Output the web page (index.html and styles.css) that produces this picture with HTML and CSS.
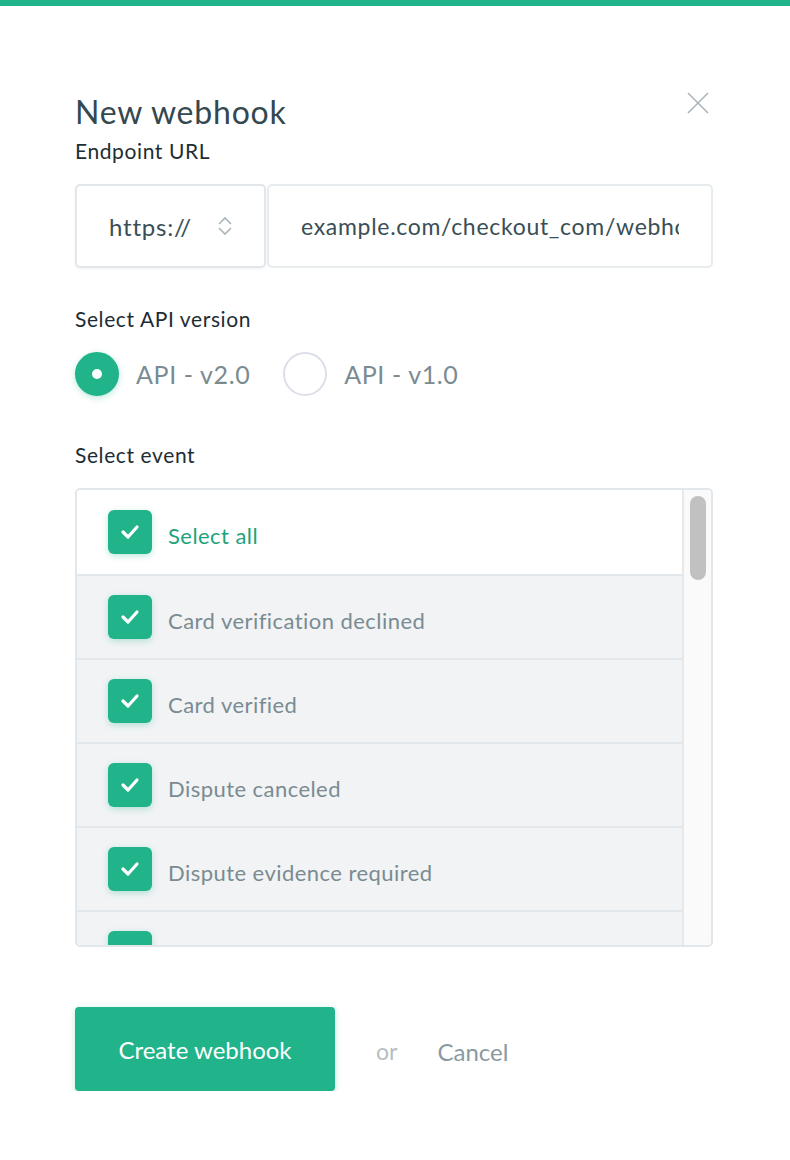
FILE: index.html
```html
<!DOCTYPE html>
<html>
<head>
<meta charset="utf-8">
<link rel="stylesheet" href="styles.css">
</head>
<body>
<div class="topbar"></div>
<div class="modal">
  <div class="head">
    <h1 class="title">New webhook</h1>
    <svg class="close" width="22" height="22" viewBox="0 0 22 22"><path d="M1 1L21 21M21 1L1 21" stroke="#a9b6bb" stroke-width="1.6" fill="none"/></svg>
  </div>
  <div class="label">Endpoint URL</div>
  <div class="url-row">
    <div class="scheme">
      <span>https://</span>
      <svg width="16" height="20" viewBox="0 0 16 20"><path d="M2 8L8 2L14 8M2 12L8 18L14 12" stroke="#a9b6bb" stroke-width="1.6" fill="none"/></svg>
    </div>
    <div class="url"><span class="url-text">example.com/checkout_com/webhook</span></div>
  </div>

  <div class="label api-label">Select API version</div>
  <div class="radios">
    <div class="radio on"><span class="dot"></span><span class="rtext">API - v2.0</span></div>
    <div class="radio"><span class="dot"></span><span class="rtext">API - v1.0</span></div>
  </div>

  <div class="label event-label">Select event</div>
  <div class="list">
    <div class="items">
      <div class="item all"><span class="cb"><svg width="20" height="16" viewBox="0 0 20 16"><path d="M3 8L8 13L17 3" stroke="#fff" stroke-width="3.2" fill="none" stroke-linecap="round" stroke-linejoin="round"/></svg></span><span>Select all</span></div>
      <div class="item"><span class="cb"><svg width="20" height="16" viewBox="0 0 20 16"><path d="M3 8L8 13L17 3" stroke="#fff" stroke-width="3.2" fill="none" stroke-linecap="round" stroke-linejoin="round"/></svg></span><span>Card verification declined</span></div>
      <div class="item"><span class="cb"><svg width="20" height="16" viewBox="0 0 20 16"><path d="M3 8L8 13L17 3" stroke="#fff" stroke-width="3.2" fill="none" stroke-linecap="round" stroke-linejoin="round"/></svg></span><span>Card verified</span></div>
      <div class="item"><span class="cb"><svg width="20" height="16" viewBox="0 0 20 16"><path d="M3 8L8 13L17 3" stroke="#fff" stroke-width="3.2" fill="none" stroke-linecap="round" stroke-linejoin="round"/></svg></span><span>Dispute canceled</span></div>
      <div class="item"><span class="cb"><svg width="20" height="16" viewBox="0 0 20 16"><path d="M3 8L8 13L17 3" stroke="#fff" stroke-width="3.2" fill="none" stroke-linecap="round" stroke-linejoin="round"/></svg></span><span>Dispute evidence required</span></div>
      <div class="item"><span class="cb"><svg width="20" height="16" viewBox="0 0 20 16"><path d="M3 8L8 13L17 3" stroke="#fff" stroke-width="3.2" fill="none" stroke-linecap="round" stroke-linejoin="round"/></svg></span></div>
    </div>
    <div class="scrollbar"><div class="thumb"></div></div>
  </div>

  <div class="actions">
    <button class="create">Create webhook</button>
    <span class="or">or</span>
    <span class="cancel">Cancel</span>
  </div>
</div>
</body>
</html>
```

FILE: styles.css
```css
* { box-sizing: border-box; }
body {
  margin: 0;
  font-family: Lato, "Noto Sans", sans-serif;
  background: #fff;
  color: #1e2d33;
}
.topbar { height: 6px; background: #21b38a; }
.modal { padding: 0 77px 0 75px; }
.head {
  display: flex;
  justify-content: space-between;
  align-items: flex-start;
  padding-top: 86px;
}
.title {
  margin: 0;
  font-size: 32px;
  font-weight: 400;
  color: #34484f;
  line-height: 40px;
  letter-spacing: 0.8px;
}
.close { margin-top: 0; margin-right: 4px; }
.label {
  font-size: 21px;
  letter-spacing: 0.6px;
  color: #1e2d33;
  line-height: 26px;
  margin-top: 6px;
}
.url-row {
  display: flex;
  margin-top: 20px;
  height: 84px;
}
.scheme {
  width: 191px;
  border: 2px solid #e1e7ea;
  border-radius: 5px;
  display: flex;
  align-items: center;
  justify-content: space-between;
  padding: 0 31px 0 32px;
  font-size: 24px;
  letter-spacing: 0.8px;
  color: #3a4e55;
  box-shadow: 0 1px 3px rgba(0,0,0,0.06);
}
.url {
  flex: 1;
  margin-left: 1px;
  border: 2px solid #e7ecee;
  border-radius: 5px;
  display: flex;
  align-items: center;
  padding-left: 32px;
  padding-right: 32px;
  font-size: 23px;
  letter-spacing: 0.7px;
  color: #3a4e55;
  white-space: nowrap;
  overflow: hidden;
}
.url-text {
  display: block;
  overflow: hidden;
  white-space: nowrap;
  min-width: 0;
  flex: 1;
}
.api-label { margin-top: 38px; }
.radios {
  display: flex;
  margin-top: 20px;
  gap: 33px;
}
.radio {
  display: flex;
  align-items: center;
  gap: 17px;
  font-size: 25px;
  letter-spacing: 0.6px;
  color: #7a8b91;
}
.radio .dot {
  width: 44px;
  height: 44px;
  border-radius: 50%;
  border: 2px solid #dcdfe8;
  background: #fff;
  display: flex;
  align-items: center;
  justify-content: center;
}
.radio.on .dot {
  background: #21b38a;
  border-color: #21b38a;
  box-shadow: 0 2px 6px rgba(33,179,138,0.3);
}
.radio.on .dot::after {
  content: "";
  width: 10px;
  height: 10px;
  border-radius: 50%;
  background: #fff;
}
.event-label { margin-top: 46px; }
.list {
  margin-top: 20px;
  height: 459px;
  border: 2px solid #e1e7ea;
  border-radius: 5px;
  display: flex;
  overflow: hidden;
}
.items { flex: 1; overflow: hidden; }
.item {
  height: 84px;
  display: flex;
  align-items: center;
  gap: 16px;
  padding-left: 31px;
  background: #f1f3f5;
  border-bottom: 2px solid #e1e7ea;
  font-size: 22px;
  letter-spacing: 0.45px;
  color: #7a8b91;
}
.item span:last-child:not(.cb) { padding-top: 6px; }
.item.all { background: #fff; color: #1ea37c; height: 86px; }
.cb {
  width: 44px;
  height: 44px;
  border-radius: 6px;
  background: #21b38a;
  display: flex;
  align-items: center;
  justify-content: center;
  box-shadow: 0 2px 6px rgba(33,179,138,0.3);
  flex: none;
}
.scrollbar {
  width: 29px;
  background: #fafafa;
  border-left: 2px solid #e8e8e8;
  padding: 6px 5px 0 6px;
}
.thumb {
  height: 84px;
  border-radius: 8px;
  background: #c1c1c1;
}
.actions {
  display: flex;
  align-items: center;
  margin-top: 60px;
}
.create {
  width: 260px;
  height: 84px;
  border: none;
  border-radius: 4px;
  background: #21b38a;
  color: #fff;
  font-family: Lato, "Noto Sans", sans-serif;
  font-size: 24px;
  box-shadow: 0 2px 6px rgba(33,179,138,0.3);
  padding: 0;
}
.or { margin-left: 41px; font-size: 23px; color: #b5bfc3; padding-top: 4px; }
.cancel { margin-left: 40px; font-size: 24px; color: #8a9aa0; padding-top: 4px; }
```
